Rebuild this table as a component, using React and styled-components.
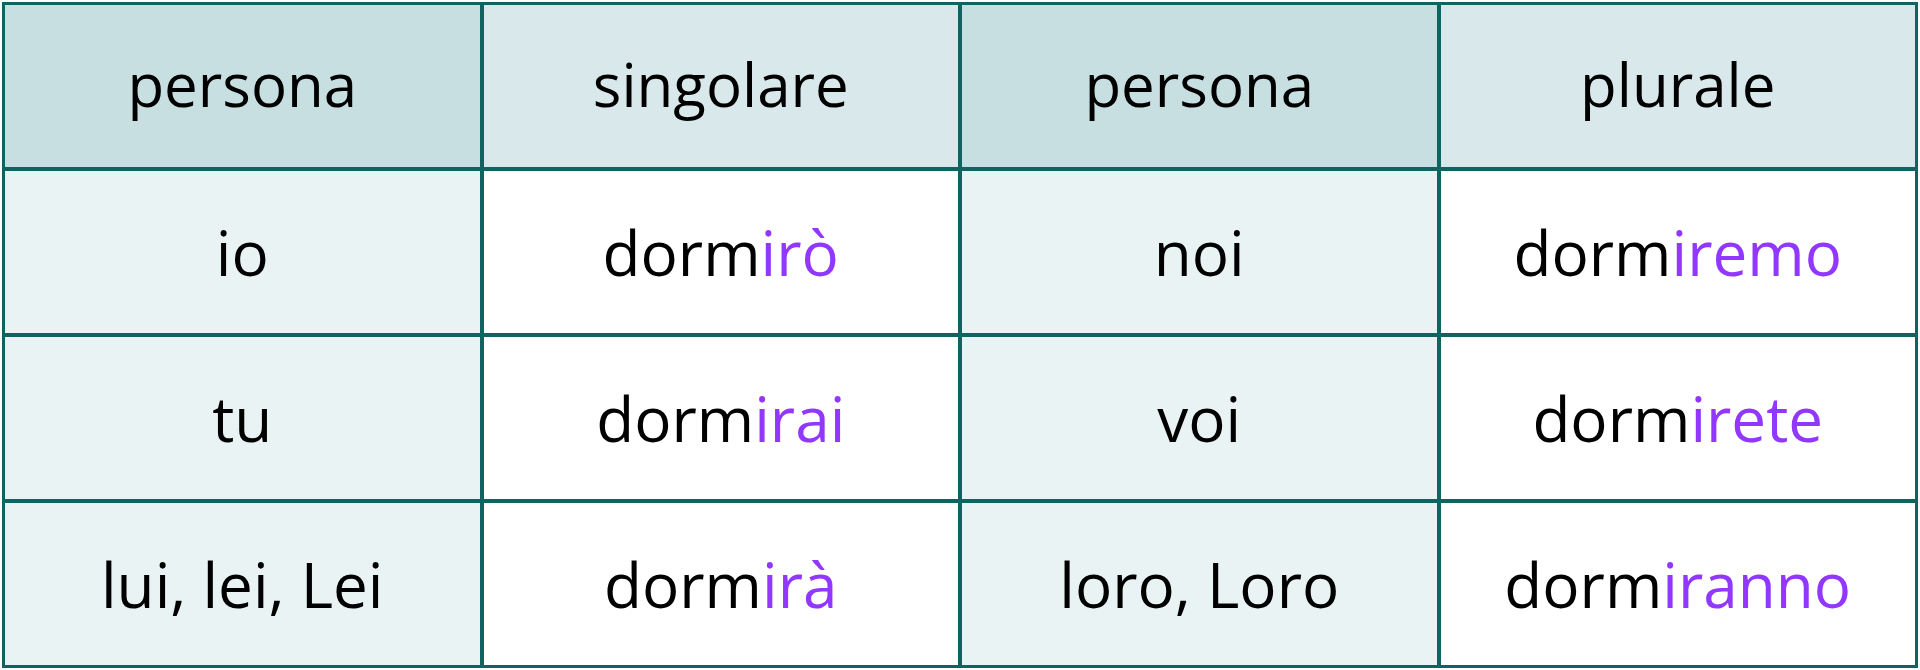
import styled, { createGlobalStyle } from 'styled-components'

const rows = [
    { p1: 'io', stem1: 'dorm', end1: 'irò', p2: 'noi', stem2: 'dorm', end2: 'iremo' },
    { p1: 'tu', stem1: 'dorm', end1: 'irai', p2: 'voi', stem2: 'dorm', end2: 'irete' },
    { p1: 'lui, lei, Lei', stem1: 'dorm', end1: 'irà', p2: 'loro, Loro', stem2: 'dorm', end2: 'iranno' },
]

const colors = {
    line: '#0f6462',
    headPerson: '#c8dfe2',
    headForm: '#d9e8ea',
    bodyPerson: '#eaf3f4',
    bodyForm: '#ffffff',
    ending: '#9237ff',
}

const GlobalStyle = createGlobalStyle`
    body {
        margin: 0;
        background: #ffffff;
    }
`

const Wrapper = styled.div`
    padding: 2px;
    width: 1916px;
`

const Table = styled.div`
    display: grid;
    grid-template-columns: repeat(4, 1fr);
    grid-auto-rows: 162px;
    gap: 4px;
    padding: 3px;
    background: ${colors.line};
    font-family: 'Open Sans', 'Noto Sans', sans-serif;
    color: #000;
`

const Cell = styled.div`
    display: flex;
    align-items: center;
    justify-content: center;
    background: ${({ $bg }) => $bg};
    line-height: 1;
    font-size: ${({ $head }) => ($head ? '60px' : '62px')};
    padding-bottom: ${({ $head }) => ($head ? '4px' : '0')};
`

const Ending = styled.span`
    color: ${colors.ending};
`

const Verb = ({ stem, end }) => (
    <span>
        {stem}
        <Ending>{end}</Ending>
    </span>
)

export default function App() {
    return (
        <>
            <GlobalStyle />
            <Wrapper>
                <Table>
                    <Cell $head $bg={colors.headPerson}>persona</Cell>
                    <Cell $head $bg={colors.headForm}>singolare</Cell>
                    <Cell $head $bg={colors.headPerson}>persona</Cell>
                    <Cell $head $bg={colors.headForm}>plurale</Cell>
                    {rows.map((row) => (
                        <>
                            <Cell key={row.p1} $bg={colors.bodyPerson}>{row.p1}</Cell>
                            <Cell $bg={colors.bodyForm}><Verb stem={row.stem1} end={row.end1} /></Cell>
                            <Cell $bg={colors.bodyPerson}>{row.p2}</Cell>
                            <Cell $bg={colors.bodyForm}><Verb stem={row.stem2} end={row.end2} /></Cell>
                        </>
                    ))}
                </Table>
            </Wrapper>
        </>
    )
}
